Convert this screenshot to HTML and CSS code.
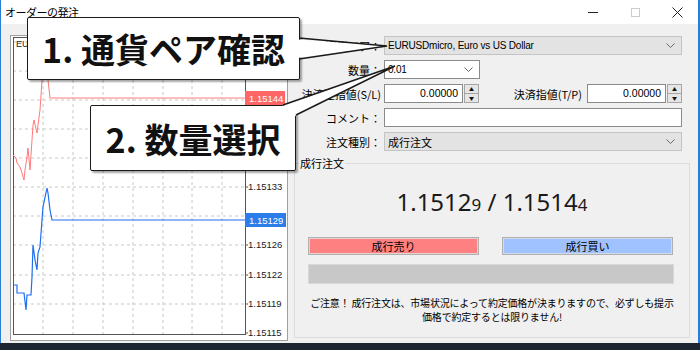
FILE: index.html
```html
<!DOCTYPE html>
<html lang="ja">
<head>
    <meta charset="UTF-8">
    <title>オーダーの発注</title>
    <link rel="stylesheet" href="styles.css">
</head>
<body>
    <div class="window">
        <div class="titlebar">
            <span class="title">オーダーの発注</span>
            <div class="controls">
                <span class="ctl"><svg width="11" height="11" viewBox="0 0 11 11"><path d="M0 5.5H10" stroke="#222" stroke-width="1"/></svg></span>
                <span class="ctl"><svg width="11" height="11" viewBox="0 0 11 11"><rect x="1.5" y="1.5" width="8" height="8" fill="none" stroke="#ccc"/></svg></span>
                <span class="ctl"><svg width="11" height="11" viewBox="0 0 11 11"><path d="M0.5 0.5L10.5 10.5M10.5 0.5L0.5 10.5" stroke="#222" stroke-width="1"/></svg></span>
            </div>
        </div>

        <div class="content">
            <!-- chart -->
            <div class="chart">
                <svg width="276" height="304" viewBox="0 0 276 304">
                    <g stroke="#c8c8c8" stroke-dasharray="3 3">
                        <path d="M32 2V299M62 2V299M92 2V299M122 2V299M152 2V299M181 2V299M211 2V299"/>
                        <path d="M2 6H234M2 35H234M2 64H234M2 93H234M2 122H234M2 151H234M2 180H234M2 209H234M2 239H234M2 268H234"/>
                    </g>
                    <rect x="2.5" y="1.5" width="232" height="297" fill="none" stroke="#555"/>
                    <text x="5" y="11" class="sym">EU</text>
                    <g stroke="#555">
                        <path d="M234 6H237M234 35H237M234 64H237M234 93H237M234 122H237M234 151H237M234 180H237M234 209H237M234 239H237M234 268H237M234 297H237"/>
                    </g>
                    <g class="axis">
                        <text x="237" y="154">1.15133</text>
                        <text x="237" y="212">1.15126</text>
                        <text x="237" y="242">1.15122</text>
                        <text x="237" y="271">1.15119</text>
                        <text x="237" y="300">1.15115</text>
                    </g>
                    <polyline fill="none" stroke="#ff7a7a" stroke-width="1"
                        points="2,119 5,122 6,127 9,131 11,137 13,144 14,134 16,121 17,112 19,134 21,104 22,89 23,84 26,97 27,89 29,74 31,44 33,24 36,34 37,44 39,62 234,62"/>
                    <polyline fill="none" stroke="#1e6ff0" stroke-width="1.2"
                        points="2,249 6,249 6,257 13,257 15,274 16,259 20,259 21,241 22,209 24,224 26,234 27,217 29,211 31,184 32,171 36,152 37,157 39,174 41,184 234,184"/>
                    <rect x="234" y="55" width="40" height="14" fill="#ff6666"/>
                    <text x="238" y="65.5" class="tag">1.15144</text>
                    <rect x="234" y="177" width="41" height="14" fill="#2b7de9"/>
                    <text x="238" y="187.5" class="tag">1.15129</text>
                </svg>
            </div>

            <!-- order form -->
            <div class="panel">
                <div class="row">
                    <label>通貨ペア：</label>
                    <div class="combo grey latin">EURUSDmicro, Euro vs US Dollar<svg class="chev" width="9" height="5" viewBox="0 0 9 5"><path d="M0.5 0.5L4.5 4.5L8.5 0.5" fill="none" stroke="#666"/></svg></div>
                </div>
                <div class="row">
                    <label>数量：</label>
                    <div class="combo small latin">0.01<svg class="chev" width="9" height="5" viewBox="0 0 9 5"><path d="M0.5 0.5L4.5 4.5L8.5 0.5" fill="none" stroke="#666"/></svg></div>
                </div>
                <div class="row">
                    <label>決済逆指値(S/L)</label>
                    <div class="spin">
                        <span class="spin-value">0.00000</span>
                        <span class="spin-btns"><span>▲</span><span>▼</span></span>
                    </div>
                    <label class="label-tp">決済指値(T/P)</label>
                    <div class="spin">
                        <span class="spin-value">0.00000</span>
                        <span class="spin-btns"><span>▲</span><span>▼</span></span>
                    </div>
                </div>
                <div class="row">
                    <label>コメント：</label>
                    <div class="input"></div>
                </div>
                <div class="row">
                    <label>注文種別：</label>
                    <div class="combo grey">成行注文<svg class="chev" width="9" height="5" viewBox="0 0 9 5"><path d="M0.5 0.5L4.5 4.5L8.5 0.5" fill="none" stroke="#666"/></svg></div>
                </div>

                <fieldset class="group">
                    <legend>成行注文</legend>
                    <div class="price">1.1512<small>9</small> / 1.1514<small>4</small></div>
                    <div class="buttons">
                        <div class="btn sell">成行売り</div>
                        <div class="btn buy">成行買い</div>
                    </div>
                    <div class="progress"></div>
                    <p class="notice">ご注意！ 成行注文は、市場状況によって約定価格が決まりますので、必ずしも提示<br>価格で約定するとは限りません!</p>
                </fieldset>
            </div>
        </div>
    </div>
    <div class="taskbar"></div>

    <!-- callouts -->
    <div class="callout c1">1. 通貨ペア確認</div>
    <div class="callout c2">2. 数量選択</div>
    <svg class="tails" width="700" height="350" viewBox="0 0 700 350">
        <polygon points="297,39.5 387,46 297,58" fill="#fff"/>
        <path d="M299 38L387 46L299 59" fill="none" stroke="#1a1a1a" stroke-width="1.5"/>
        <polygon points="282,106 395,66 295,116" fill="#fff"/>
        <path d="M283 105L395 66L296 115" fill="none" stroke="#1a1a1a" stroke-width="1.5"/>
    </svg>
</body>
</html>
```

FILE: styles.css
```css
body {
    margin: 0;
    width: 700px;
    height: 350px;
    overflow: hidden;
    position: relative;
    background-color: #1c2531;
    font-family: "Noto Sans CJK JP", sans-serif;
    font-size: 11px;
    color: #000;
}

.window {
    height: 343px;
    box-sizing: border-box;
    border-left: 1px solid #2a7fd4;
    border-right: 2px solid #2a7fd4;
    background-color: #f0f0f0;
    display: flex;
    flex-direction: column;
}

.titlebar {
    height: 24px;
    flex: none;
    background-color: #fff;
    display: flex;
    align-items: center;
    padding-left: 4px;
}

.title {
    font-size: 11px;
    letter-spacing: -0.5px;
}

.controls {
    margin-left: auto;
    display: flex;
}

.ctl {
    width: 42px;
    height: 24px;
    display: flex;
    align-items: center;
    justify-content: center;
}

.content {
    flex: 1;
    display: flex;
    padding: 11px 8px 0 9px;
}

.chart {
    width: 278px;
    height: 306px;
    box-sizing: border-box;
    border: 1px solid #a0a0a0;
    background-color: #fff;
}

.chart svg {
    display: block;
}

.chart text {
    font-family: "Liberation Sans", sans-serif;
}

.sym {
    font-size: 9px;
    fill: #222;
}

.axis text {
    font-size: 9.5px;
    fill: #222;
}

.tag {
    font-size: 9.5px;
    fill: #fff;
}

.panel {
    flex: 1;
    margin-left: 4px;
    padding-top: 1px;
    display: flex;
    flex-direction: column;
    gap: 5px;
}

.row {
    display: flex;
    align-items: center;
    height: 19px;
    margin-right: 8px;
}

.row label {
    width: 89px;
    margin-right: 3px;
    text-align: right;
    white-space: nowrap;
}

.row .label-tp {
    width: auto;
    flex: 1;
    margin-right: 5px;
}

.combo, .input, .spin {
    height: 19px;
    box-sizing: border-box;
    border: 1px solid #a5a5a5;
    background-color: #fff;
}

.combo {
    flex: 1;
    display: flex;
    align-items: center;
    padding-left: 3px;
}

.combo.latin {
    font-family: "Liberation Sans", sans-serif;
    font-size: 10px;
    letter-spacing: -0.2px;
}

.combo.grey {
    background-color: #e3e3e3;
    border-color: #c4c4c4;
}

.combo.small {
    flex: none;
    width: 96px;
    border-color: #8a8a8a;
}

.chev {
    margin-left: auto;
    margin-right: 6px;
}

.input {
    flex: 1;
    border-color: #8a8a8a;
}

.spin {
    width: 95px;
    display: flex;
    border: none;
    background: none;
}

.spin-value {
    flex: 1;
    border: 1px solid #8a8a8a;
    background-color: #fff;
    text-align: right;
    padding-right: 4px;
    font-family: "Liberation Sans", sans-serif;
    font-size: 10.5px;
    line-height: 17px;
}

.spin-btns {
    width: 13px;
    margin-left: 1px;
    display: flex;
    flex-direction: column;
    border: 1px solid #a5a5a5;
    background-color: #e6e6e6;
}

.spin-btns span {
    flex: 1;
    font-size: 5px;
    line-height: 8px;
    text-align: center;
    color: #111;
}

.spin-btns span + span {
    border-top: 1px solid #a5a5a5;
}

.group {
    flex: 1;
    margin: 0 0 5px 2px;
    padding: 0;
    border: 1px solid #dcdcdc;
    min-width: 0;
}

.group legend {
    margin-left: 4px;
    padding: 0 1px;
    line-height: 14px;
}

.price {
    margin-top: 17px;
    text-align: center;
    font-family: "Noto Sans", sans-serif;
    font-size: 24px;
    line-height: 30px;
    color: #1a1a1a;
}

.price small {
    font-size: 17px;
}

.buttons {
    display: flex;
    gap: 23px;
    margin: 17px 16px 0 13px;
}

.btn {
    flex: 1;
    height: 18px;
    box-sizing: border-box;
    border: 1px solid #b0b0b0;
    text-align: center;
    line-height: 16px;
}

.btn.sell {
    background-color: #ff8080;
    box-shadow: inset 0 0 0 1px #e7d0d0;
}

.btn.buy {
    background-color: #a0c2ff;
    box-shadow: inset 0 0 0 1px #d0dae8;
}

.progress {
    height: 20px;
    box-sizing: border-box;
    margin: 9px 15px 0 13px;
    background-color: #c8c8c8;
    border: 1px solid #d8d8d8;
}

.notice {
    margin: 12px 0 0;
    text-align: center;
    font-size: 10px;
    line-height: 14px;
    letter-spacing: -0.2px;
    white-space: nowrap;
}

.taskbar {
    height: 7px;
}

.callout {
    position: absolute;
    box-sizing: border-box;
    display: flex;
    align-items: center;
    justify-content: center;
    background-color: #fff;
    border: 1.5px solid #1a1a1a;
    border-radius: 2px;
    box-shadow: 2px 2px 2px rgba(0, 0, 0, 0.35);
    font-size: 34px;
    font-weight: 700;
    color: #111;
    white-space: nowrap;
}

.c1 {
    left: 27px;
    top: 17px;
    width: 273px;
    height: 63px;
}

.c2 {
    left: 90px;
    top: 105px;
    width: 206px;
    height: 66px;
}

.tails {
    position: absolute;
    left: 0;
    top: 0;
}
```
